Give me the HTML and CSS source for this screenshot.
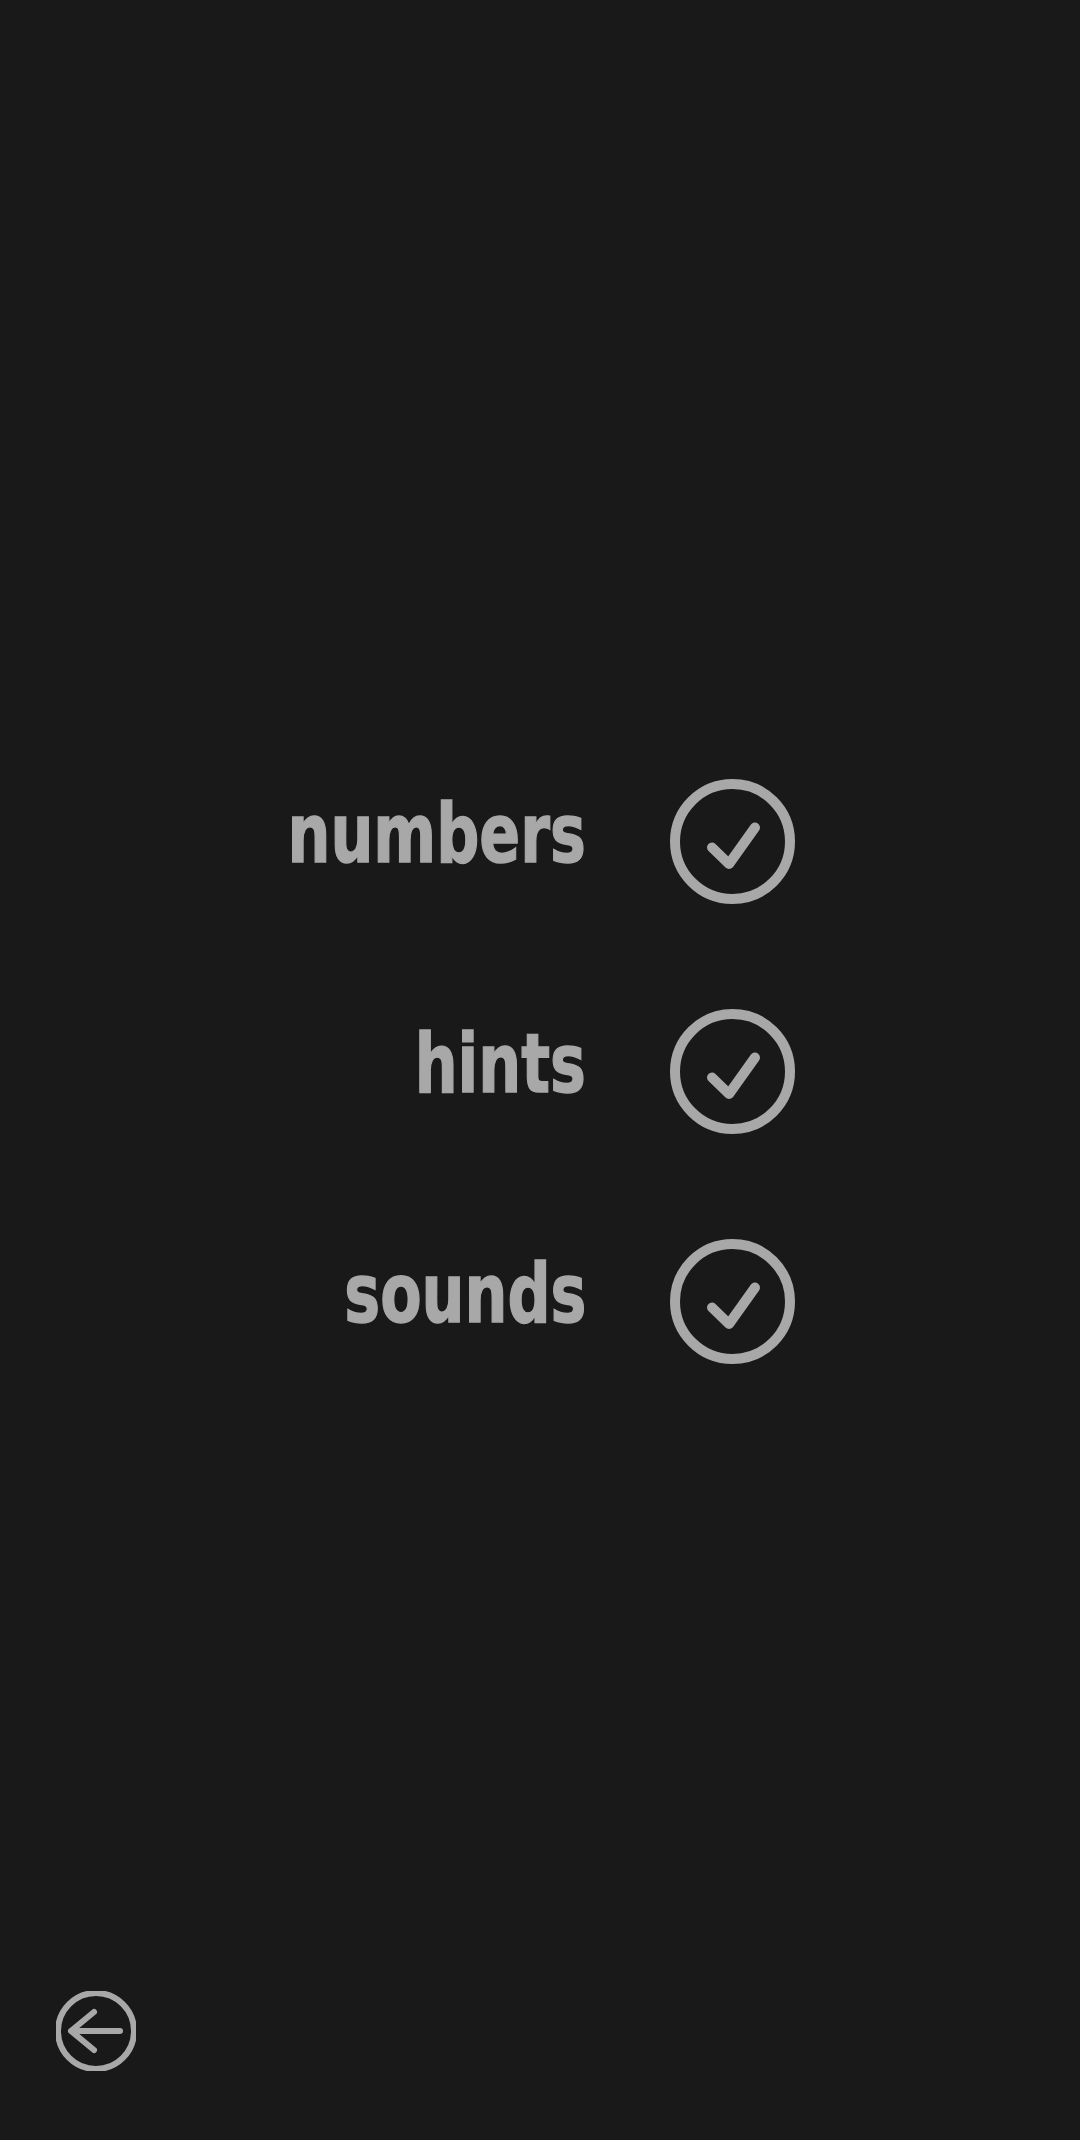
FILE: index.html
```html
<!DOCTYPE html>
<html>
	<head>
		<meta charset="UTF-8">
		<meta name="viewport" content="width=device-width, initial-scale=1.0">
		<title>settings</title>
		<link rel="stylesheet" href="styles.css">
	</head>
	<body>
		<div class="menu">
			<div class="row">
				<div class="name"><span class="label">numbers</span></div>
				<svg class="check" viewBox="0 0 125 125"><circle cx="62.5" cy="62.5" r="57.5"/><path d="M42 68.500 L59 85 L85 48.500"/></svg>
			</div>
			<div class="row">
				<div class="name"><span class="label">hints</span></div>
				<svg class="check" viewBox="0 0 125 125"><circle cx="62.5" cy="62.5" r="57.5"/><path d="M42 68.500 L59 85 L85 48.500"/></svg>
			</div>
			<div class="row">
				<div class="name"><span class="label">sounds</span></div>
				<svg class="check" viewBox="0 0 125 125"><circle cx="62.5" cy="62.5" r="57.5"/><path d="M42 68.500 L59 85 L85 48.500"/></svg>
			</div>
		</div>
		<div class="foot">
			<svg class="back" viewBox="0 0 80 80"><circle cx="40" cy="40" r="38"/><path d="M64 40 H15 M38 21 L15 40 L38 59"/></svg>
		</div>
	</body>
</html>
```

FILE: styles.css
```css
*{
	margin: 0;
	padding: 0;
}
body{
	width: 1080px;
	height: 2140px;
	background: #191919;
	display: flex;
	flex-direction: column;
	overflow: hidden;
}
.menu{
	flex: 1;
	padding-top: 152px;
	display: flex;
	flex-direction: column;
	justify-content: center;
	gap: 105px;
}
.row{
	display: flex;
	align-items: center;
	height: 125px;
	padding-left: 286px;
	gap: 84px;
}
.name{
	width: 300px;
	display: flex;
	justify-content: flex-end;
	padding-bottom: 16px;
}
.label{
	flex: none;
	font-family: "DejaVu Sans", sans-serif;
	font-weight: 700;
	font-size: 82px;
	line-height: 88px;
	color: #a8a8a8;
	-webkit-text-stroke: 1.5px #a8a8a8;
	transform: scaleX(0.735);
	transform-origin: right center;
	white-space: nowrap;
}
.check{
	width: 125px;
	height: 125px;
	fill: none;
	stroke: #a8a8a8;
	stroke-width: 10;
	stroke-linecap: round;
	stroke-linejoin: round;
}
.foot{
	padding: 0 0 69px 56px;
	height: 80px;
}
.back{
	display: block;
	width: 80px;
	height: 80px;
	fill: none;
	stroke: #a8a8a8;
	stroke-width: 6;
	stroke-linecap: round;
	stroke-linejoin: round;
}
```
